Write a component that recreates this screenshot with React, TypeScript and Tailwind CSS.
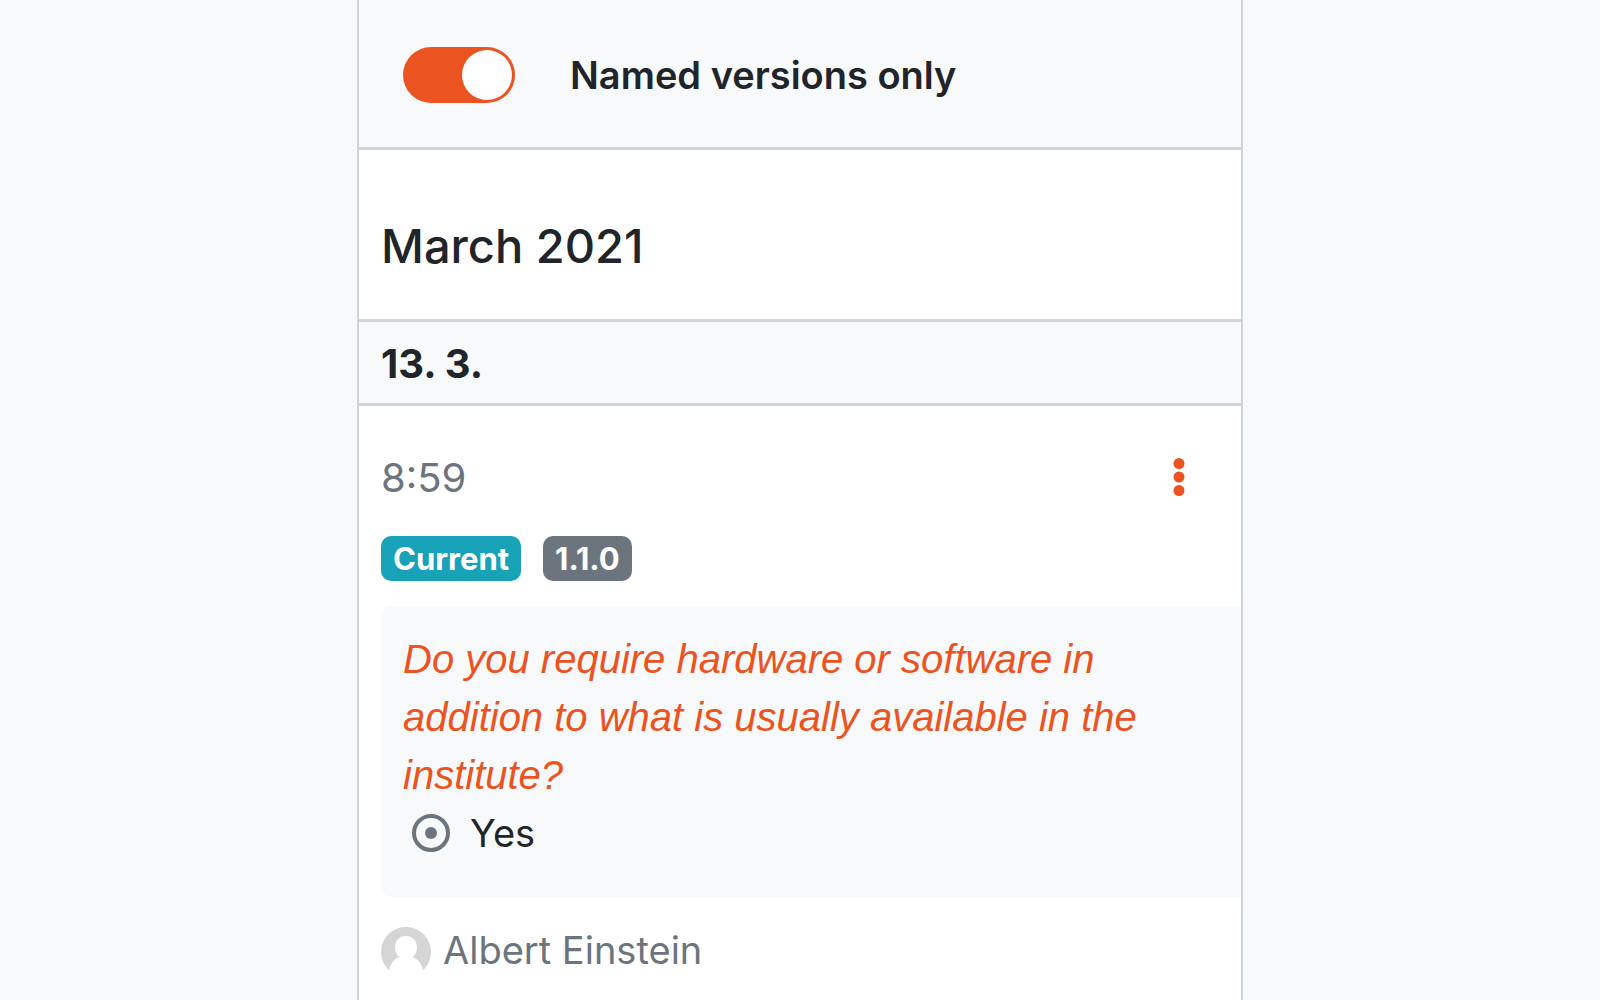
import { useState } from "react";

function Badge({ label, className }: { label: string; className: string }) {
  return (
    <span
      className={`flex h-[45px] items-center rounded-[10px] px-3 text-[31px] leading-none font-bold text-white ${className}`}
    >
      {label}
    </span>
  );
}

function Avatar() {
  return (
    <svg viewBox="0 0 50 50" className="size-[50px] shrink-0" aria-hidden="true">
      <path
        d="M8 43.300A25 25 0 1 1 42 43.300C40.500 36.500 37 32 31.500 30C34.500 28 36 24.500 36 20.500C36 13.500 31.500 9 25 9S14 13.500 14 20.500C14 24.500 15.500 28 18.500 30C13 32 9.500 36.500 8 43.300Z"
        fill="#d5d5d5"
      />
    </svg>
  );
}

export default function App() {
  const [namedOnly, setNamedOnly] = useState(true);

  return (
    <div className="flex min-h-screen justify-center overflow-hidden bg-[#f8f9fb] font-['Inter',sans-serif] text-[38px] leading-[58px] text-[#212529]">
      <main className="w-full max-w-[886px] border-x-2 border-[#ced4da] bg-white">
        <header className="flex h-[150px] items-center border-b-3 border-[#ced4da] bg-[#f8f9fb] pt-[2px] pl-11">
          <input
            id="named-versions"
            type="checkbox"
            role="switch"
            checked={namedOnly}
            onChange={(e) => setNamedOnly(e.target.checked)}
            className="flex h-14 w-28 cursor-pointer appearance-none items-center rounded-full bg-[#adb5bd] px-[3px] before:size-[50px] before:rounded-full before:bg-white checked:justify-end checked:bg-[#eb5420]"
          />
          <label htmlFor="named-versions" className="cursor-pointer pl-[55px] font-semibold">
            Named versions only
          </label>
        </header>

        <h2 className="border-b-3 border-[#ced4da] px-[22px] pt-[67px] pb-[45px] text-[47px] leading-[57px] font-medium">
          March 2021
        </h2>

        <h3 className="border-b-3 border-[#ced4da] bg-[#f8f9fb] px-[22px] pt-[13px] pb-[10px] text-[40px] font-bold">
          13. 3.
        </h3>

        <article className="pt-[43px] pl-[22px]">
          <div className="flex items-center justify-between pr-[50px] text-[#6c757d]">
            <time className="text-[40px]">8:59</time>
            <button type="button" aria-label="Version actions" className="flex h-14 w-6 items-center justify-center">
              <svg viewBox="0 0 12 40" className="h-10 w-3 fill-[#eb5420]" aria-hidden="true">
                <circle cx="6" cy="5.500" r="5.500" />
                <circle cx="6" cy="19" r="5.500" />
                <circle cx="6" cy="32.500" r="5.500" />
              </svg>
            </button>
          </div>

          <div className="mt-[29px] flex gap-[22px]">
            <Badge label="Current" className="bg-[#17a2b8]" />
            <Badge label="1.1.0" className="bg-[#6c757d]" />
          </div>

          <section className="mt-[25px] rounded-l-[10px] bg-[#f8f9fb] pt-6 pr-8 pb-[35px] pl-[22px]">
            <a href="#question" className="block font-['Liberation_Sans',sans-serif] text-[40px] text-[#eb5420] italic">
              Do you require hardware or software in addition to what is usually available in the institute?
            </a>
            <label className="flex items-center gap-5 pl-[9px]">
              <input
                type="radio"
                defaultChecked
                className="grid size-[38px] shrink-0 appearance-none place-items-center rounded-full border-4 border-[#6c757d] before:size-3 before:rounded-full checked:before:bg-[#6c757d]"
              />
              Yes
            </label>
          </section>

          <footer className="mt-[26px] flex items-end gap-3 pb-4 leading-[54px] text-[#6c757d]">
            <Avatar />
            <span>Albert Einstein</span>
          </footer>
        </article>
      </main>
    </div>
  );
}
